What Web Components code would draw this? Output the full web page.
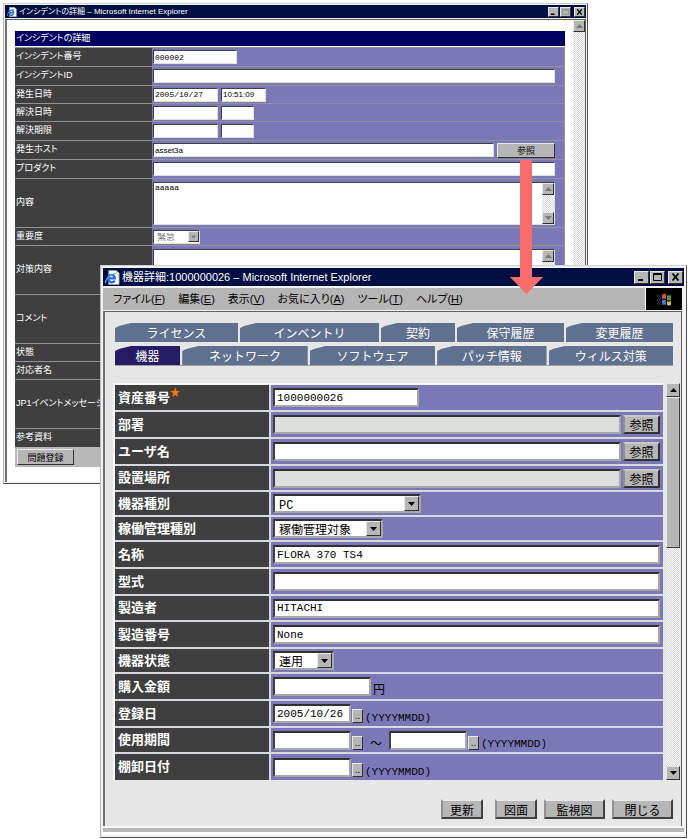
<!DOCTYPE html>
<html lang="ja">
<head>
<meta charset="utf-8">
<title>機器詳細</title>
<style>
    body {
        margin: 0;
        background: #fff;
        font-family: "Liberation Sans", "Noto Sans CJK JP", sans-serif;
    }
</style>
</head>
<body>
<asset-desktop>
    <desktop-window slot="back" small heading="インシデントの詳細 – Microsoft Internet Explorer">
        <incident-form></incident-form>
    </desktop-window>
    <desktop-window slot="front" heading="機器詳細:1000000026 – Microsoft Internet Explorer">
        <menu-bar slot="menu"></menu-bar>
        <tab-strip></tab-strip>
        <asset-form></asset-form>
    </desktop-window>
</asset-desktop>

<script>
// Bevels and reset shared by every shadow root
const BASE = `
    *, *::before, *::after { box-sizing: border-box; }
    button, input, select, textarea {
        margin: 0;
        padding: 0;
        border-radius: 0;
        font: inherit;
        color: #000;
        min-width: 0;
    }
    button {
        background: #b6b6b6;
        border: 1px solid;
        border-color: #e8e8e8 #303030 #303030 #e8e8e8;
        display: flex;
        align-items: center;
        justify-content: center;
    }
`;

class AssetDesktop extends HTMLElement {
    constructor() {
        super();
        this.attachShadow({ mode: 'open' });
        this.shadowRoot.innerHTML = `
            <style>
                ${BASE}
                :host { display: block; position: relative; min-height: 100vh; overflow: hidden; }
                .back { position: absolute; top: 3px; left: 3px; right: 100px; }
                .front { position: relative; margin: 265px 1px 0 100px; }
                .arrow { position: absolute; top: 160px; right: 145px; width: 33px; height: 134px; }
            </style>
            <div class="back"><slot name="back"></slot></div>
            <div class="front"><slot name="front"></slot></div>
            <svg class="arrow" viewBox="0 0 33 134" aria-hidden="true">
                <path fill="#f86c6a" d="M10 0h12v117h11L16.500 134 0 117h10z"/>
            </svg>
        `;
    }
}

class DesktopWindow extends HTMLElement {
    constructor() {
        super();
        this.attachShadow({ mode: 'open' });
    }

    connectedCallback() {
        const small = this.hasAttribute('small');
        this.shadowRoot.innerHTML = `
            <style>
                ${BASE}
                :host {
                    display: block;
                    --bar: 18px;
                    --ctl: 15px;
                    --ctlh: 13px;
                    --page: #e6e6e6;
                    border: 1px solid;
                    border-color: #d0d0d0 #505050 #505050 #b8b8b8;
                    background: #f2f2f2;
                    padding: 2px;
                    font-size: 11px;
                }
                :host([small]) {
                    --bar: 13px;
                    --ctl: 11px;
                    --ctlh: 10px;
                    --page: #fff;
                    padding: 1px;
                    font-size: 8px;
                }
                header {
                    display: flex;
                    align-items: center;
                    height: var(--bar);
                    padding: 0 1px 0 2px;
                    gap: 2px;
                    background: #000e42;
                    color: #fff;
                }
                header svg { flex: none; height: calc(var(--bar) - 3px); width: auto; }
                h1 {
                    flex: 1;
                    margin: 0;
                    font-size: inherit;
                    font-weight: 400;
                    line-height: var(--bar);
                    white-space: nowrap;
                    overflow: hidden;
                    font-feature-settings: "palt";
                }
                .controls { display: flex; gap: 1px; }
                .controls button { width: var(--ctl); height: var(--ctlh); }
                .controls button:last-child { margin-left: 2px; }
                .controls svg { width: 9px; height: 8px; }
                :host([small]) .controls svg { width: 7px; height: 6px; }
                .page {
                    background: var(--page);
                    border-left: 2px solid #707070;
                    border-top: 1px solid #606060;
                    border-right: 1px solid #606060;
                    margin-right: 2px;
                    margin-top: 1px;
                }
                :host([small]) .page { margin-right: 0; }
                .status {
                    height: 9px;
                    border-top: 2px solid #f8f8f8;
                    border-bottom: 3px solid #fff;
                    background: #b8b8b8;
                }
                :host([small]) .status { display: none; }
            </style>
            <header>
                <svg viewBox="0 0 16 16" aria-hidden="true">
                    <path fill="#fff" stroke="#999" d="M4 .5h8l3 3v12H4z"/>
                    <path fill="#c8c8c8" d="M12 .5v3h3z"/>
                    <path fill="none" stroke="#2468d8" stroke-width="2.400" d="M3.500 9h7c0-5-7-5-7 0s5 5 7 2.300"/>
                    <path fill="none" stroke="#58a8f0" stroke-width="1.300" d="M1 14C-1 11 7 3 12 4"/>
                </svg>
                <h1></h1>
                <div class="controls">
                    <button aria-label="最小化"><svg viewBox="0 0 9 8"><path d="M1 6h5v2H1z"/></svg></button>
                    <button aria-label="最大化"><svg viewBox="0 0 9 8"><path fill="none" stroke="${small ? '#888' : '#000'}" d="M.5 .5h8v7h-8zM.5 1.500h8"/></svg></button>
                    <button aria-label="閉じる"><svg viewBox="0 0 9 8"><path stroke="#000" stroke-width="1.800" d="M1.500 .5l6 7M7.500 .5l-6 7"/></svg></button>
                </div>
            </header>
            <slot name="menu"></slot>
            <div class="page"><slot></slot></div>
            <div class="status"></div>
        `;
        this.shadowRoot.querySelector('h1').textContent = this.getAttribute('heading');
    }
}

class MenuBar extends HTMLElement {
    constructor() {
        super();
        const items = [['ファイル', 'F'], ['編集', 'E'], ['表示', 'V'], ['お気に入り', 'A'], ['ツール', 'T'], ['ヘルプ', 'H']];
        this.attachShadow({ mode: 'open' });
        this.shadowRoot.innerHTML = `
            <style>
                ${BASE}
                :host {
                    display: flex;
                    height: 22px;
                    margin: 2px 2px 0 0;
                    background: #b5b5b5;
                    font-size: 11px;
                }
                nav { flex: 1; display: flex; gap: 13px; padding-left: 10px; align-items: center; }
                nav button {
                    background: none;
                    border: 0;
                    line-height: 18px;
                    white-space: nowrap;
                    font-feature-settings: "palt";
                }
                .logo {
                    width: 37px;
                    background: #000;
                    border-left: 1px solid #fff;
                    display: flex;
                    align-items: center;
                    justify-content: center;
                }
            </style>
            <nav>${items.map(([text, key]) => `<button><span>${text}(<u>${key}</u>)</span></button>`).join('')}</nav>
            <div class="logo">
                <svg width="15" height="13" viewBox="0 0 15 13" aria-hidden="true">
                    <path fill="#d85040" d="M5 2q2-2 4-1v5q-2-1-4 0z"/>
                    <path fill="#4c9c50" d="M10 2q2 1 4 0v5q-2 1-4 0z"/>
                    <path fill="#4878d0" d="M5 7q2-1 4 0v5q-2-1-4 0z"/>
                    <path fill="#d8b840" d="M10 8q2 1 4 0v4q-2 1-4 0z"/>
                    <path fill="none" stroke="#5868a0" stroke-dasharray="1 1" d="M0 3h4M1 5h3M0 7h4M1 9h3M0 11h4"/>
                </svg>
            </div>
        `;
    }
}

class TabStrip extends HTMLElement {
    constructor() {
        super();
        // [text, share of the row's width]
        const rows = [
            [['ライセンス', 123], ['インベントリ', 139], ['契約', 74], ['保守履歴', 107], ['変更履歴', 107]],
            [['機器', 65], ['ネットワーク', 125], ['ソフトウェア', 125], ['パッチ情報', 109], ['ウィルス対策', 124]]
        ];
        this.attachShadow({ mode: 'open' });
        this.shadowRoot.innerHTML = `
            <style>
                ${BASE}
                :host { display: grid; gap: 4px; padding: 11px 8px 0 10px; font-size: 12px; }
                .row { display: flex; gap: 2px; }
                .row:last-child { border-bottom: 1px solid #a0a0a0; }
                button {
                    flex: 1 1 0;
                    height: 19px;
                    border: 0;
                    background: #60708f;
                    color: #fff;
                    white-space: nowrap;
                    clip-path: polygon(0 5px, 4px 3px, 16px 0, 100% 0, 100% 100%, 0 100%);
                }
                button[aria-selected="true"] { background: #261c64; }
            </style>
            ${rows.map(row => `<div class="row" role="tablist">${row.map(([text, grow]) =>
                `<button role="tab" aria-selected="${text === '機器'}" style="flex-grow:${grow}">${text}</button>`).join('')}</div>`).join('')}
        `;
    }
}

class WinScrollbar extends HTMLElement {
    constructor() {
        super();
        this.attachShadow({ mode: 'open' });
        this.shadowRoot.innerHTML = `
            <style>
                ${BASE}
                :host {
                    display: flex;
                    flex-direction: column;
                    flex: none;
                    width: var(--size, 12px);
                    background: repeating-conic-gradient(#fafafa 0 25%, #d8d8d8 0 50%) 0 0 / 2px 2px;
                }
                button { height: var(--size, 12px); flex: none; }
                .thumb { height: 38%; background: #b6b6b6; border: 1px solid; border-color: #f0f0f0 #404040 #404040 #f0f0f0; }
                .space { flex: 1; }
                svg { width: 7px; height: 4px; fill: #000; }
                :host(:not([thumb])) .thumb { display: none; }
                :host(:not([thumb])) svg { fill: #777; }
            </style>
            <button aria-label="上へ"><svg viewBox="0 0 7 4"><path d="M0 4L3.500 0 7 4z"/></svg></button>
            <div class="thumb"></div>
            <div class="space"></div>
            <button aria-label="下へ"><svg viewBox="0 0 7 4"><path d="M0 0L3.500 4 7 0z"/></svg></button>
        `;
    }
}

const PICK = `
    .pick { display: grid; align-items: center; }
    .pick select { grid-area: 1 / 1; width: 100%; appearance: none; }
    .pick i {
        grid-area: 1 / 1;
        justify-self: end;
        margin-right: 2px;
        background: #b6b6b6;
        border: 1px solid;
        border-color: #e8e8e8 #303030 #303030 #e8e8e8;
        display: flex;
        align-items: center;
        justify-content: center;
        pointer-events: none;
    }
`;
const DOWN = '<i><svg width="7" height="4" viewBox="0 0 7 4"><path d="M0 0h7L3.500 4z"/></svg></i>';

class IncidentForm extends HTMLElement {
    constructor() {
        super();
        const area = (id, text = '') => `<div class="area"><textarea id="${id}">${text}</textarea><win-scrollbar></win-scrollbar></div>`;
        const rows = [
            ['no', 'インシデント番号', 'mid', '<input id="no" class="w84" value="000002">'],
            ['iid', 'インシデントID', 'mid', '<input id="iid" class="fill">'],
            ['start', '発生日時', 'low', '<input id="start" class="w65" value="2005/10/27"><input class="w45 sans" aria-label="発生時刻" value="10:51:09">'],
            ['end', '解決日時', 'low', '<input id="end" class="w65"><input class="w33" aria-label="解決時刻">'],
            ['due', '解決期限', 'mid', '<input id="due" class="w65"><input class="w33" aria-label="期限時刻">'],
            ['host', '発生ホスト', 'mid', '<input id="host" class="fill sans" value="asset3a"><button class="ref">参照</button>'],
            ['product', 'プロダクト', 'mid', '<input id="product" class="fill">'],
            ['body', '内容', 'tall', area('body', 'aaaaa')],
            ['level', '重要度', 'low', `<div class="pick"><select id="level" disabled><option>緊急</option></select>${DOWN}</div>`],
            ['action', '対策内容', 'tall', area('action')],
            ['comment', 'コメント', 'tall', area('comment')],
            ['state', '状態', 'low', '<input id="state" class="fill">'],
            ['person', '対応者名', 'low', '<input id="person" class="fill">'],
            ['event', 'JP1イベントメッセージ', 'tall', area('event')],
            ['docs', '参考資料', 'mid', '<input id="docs" class="fill">']
        ];
        this.attachShadow({ mode: 'open' });
        this.shadowRoot.innerHTML = `
            <style>
                ${BASE}
                ${PICK}
                :host { display: flex; font-size: 9px; }
                form { flex: 1; padding: 11px 8px 15px; }
                h2 {
                    margin: 0 0 1px;
                    padding-left: 1px;
                    height: 15px;
                    line-height: 14px;
                    font-size: 9px;
                    font-weight: 400;
                    color: #fff;
                    background: #000060;
                    font-feature-settings: "palt";
                }
                .row {
                    display: grid;
                    grid-template-columns: 137px 1fr;
                    border: 1px solid #929298;
                    border-width: 1px 1px 0 0;
                    background: #3f3f3f;
                }
                .low { height: 18px; }
                .mid { height: 19px; }
                .tall { height: 49px; }
                label {
                    align-self: center;
                    padding: 0 0 2px 1px;
                    line-height: 14px;
                    color: #fff;
                    white-space: nowrap;
                    font-feature-settings: "palt";
                }
                .value {
                    display: flex;
                    align-items: center;
                    gap: 3px;
                    padding: 0 9px 0 1px;
                    background: #7b78b8;
                }
                input, textarea, select {
                    height: 14px;
                    padding: 0 1px;
                    border: 1px solid;
                    border-color: #404040 #e0e0e0 #e0e0e0 #404040;
                    background: #fff;
                    font: 8px "Liberation Mono", "Noto Sans CJK JP", monospace;
                }
                .sans { font-family: "Liberation Sans", sans-serif; }
                .fill { flex: 1; }
                .w84 { width: 84px; }
                .w65 { width: 65px; }
                .w45 { width: 45px; }
                .w33 { width: 33px; }
                .ref { width: 58px; height: 15px; }
                .area { flex: 1; display: flex; height: 43px; border: 1px solid; border-color: #404040 #e0e0e0 #e0e0e0 #404040; background: #fff; }
                .area textarea { flex: 1; height: auto; border: 0; resize: none; }
                .pick { width: 47px; }
                select { font-size: 9px; padding: 2px 0 0 3px; }
                select:disabled { color: #777; opacity: 1; }
                .pick i { width: 11px; height: 11px; margin-right: 1px; }
                .pick svg { fill: #777; width: 5px; }
                footer { height: 20px; padding: 2px; background: #b8b8b8; }
                footer button { width: 57px; height: 16px; }
            </style>
            <form>
                <h2>インシデントの詳細</h2>
                ${rows.map(([id, label, size, control]) =>
                    `<div class="row ${size}"><label for="${id}">${label}</label><div class="value">${control}</div></div>`).join('')}
                <footer><button type="button">問題登録</button></footer>
            </form>
            <win-scrollbar></win-scrollbar>
        `;
    }
}

class AssetForm extends HTMLElement {
    constructor() {
        super();
        const select = (id, text, width) => `<div class="pick ${width}"><select id="${id}"><option>${text}</option></select>${DOWN}</div>`;
        const date = (id, value = '') => `<span class="date"><input id="${id}" class="w78" value="${value}" aria-label="日付"><button type="button" class="dots">..</button></span>`;
        const ref = '<button type="button" class="ref">参照</button>';
        const rows = [
            ['asset', '資産番号<b>★</b>', 'tall', '<input id="asset" class="w146" value="1000000026">'],
            ['dept', '部署', 'tall', `<input id="dept" class="fill" readonly>${ref}`],
            ['user', 'ユーザ名', 'tall', `<input id="user" class="fill">${ref}`],
            ['place', '設置場所', 'mid', `<input id="place" class="fill" readonly>${ref}`],
            ['kind', '機器種別', 'low', select('kind', 'PC', 'w148')],
            ['run', '稼働管理種別', 'low', select('run', '稼働管理対象', 'w110')],
            ['name', '名称', 'tall', '<input id="name" class="fill" value="FLORA 370 TS4">'],
            ['model', '型式', 'tall', '<input id="model" class="fill">'],
            ['maker', '製造者', 'mid', '<input id="maker" class="fill" value="HITACHI">'],
            ['serial', '製造番号', 'tall', '<input id="serial" class="fill" value="None">'],
            ['state', '機器状態', 'low', select('state', '運用', 'w61')],
            ['price', '購入金額', 'tall', '<input id="price" class="w98"><span class="yen">円</span>'],
            ['added', '登録日', 'tall', `${date('added', '2005/10/26')}<span class="hint">(YYYYMMDD)</span>`],
            ['from', '使用期間', 'mid', `${date('from')}<span class="wave">～</span>${date('to')}<span class="hint">(YYYYMMDD)</span>`],
            ['stock', '棚卸日付', 'tall', `${date('stock')}<span class="hint">(YYYYMMDD)</span>`]
        ];
        this.attachShadow({ mode: 'open' });
        this.shadowRoot.innerHTML = `
            <style>
                ${BASE}
                ${PICK}
                :host { display: block; padding: 17px 1px 7px 8px; font-size: 12px; }
                .scroller { display: flex; gap: 3px; --size: 14px; }
                .rows { flex: 1; border: 2px solid #fafafa; border-width: 2px 0 0 2px; }
                .row {
                    display: grid;
                    grid-template-columns: 154px 1fr;
                    gap: 2px;
                    background: #d8d8e0;
                    border-bottom: 2px solid #d8d8e0;
                }
                .low { height: 25px; }
                .mid { height: 26px; }
                .tall { height: 27px; }
                .row:last-child { border-bottom: 0; height: 26px; }
                label {
                    display: flex;
                    align-items: center;
                    padding-left: 3px;
                    background: #3f3f3f;
                    color: #fff;
                    font-size: 13px;
                    font-weight: 700;
                    line-height: 18px;
                }
                label b { color: #ff7800; font-size: 10px; line-height: 10px; align-self: flex-start; padding-top: 3px; }
                .value { display: flex; align-items: center; gap: 2px; padding: 0 3px 0 2px; background: #7b78b8; }
                input, select {
                    height: 19px;
                    padding: 0 2px;
                    border: 2px solid;
                    border-color: #303030 #a8a8a8 #a8a8a8 #404040;
                    background: #fff;
                    font: 11px "Liberation Mono", "Noto Sans CJK JP", monospace;
                }
                input[readonly] { background: #dcdedc; }
                .fill { flex: 1; }
                .w146 { width: 146px; }
                .w148 { width: 148px; }
                .w110 { width: 110px; }
                .w98 { width: 98px; }
                .w78 { width: 78px; }
                .w61 { width: 61px; }
                select { font-size: 12px; padding: 3px 0 0 4px; }
                .pick i { width: 15px; height: 15px; }
                .ref { width: 37px; height: 19px; border-width: 2px; border-color: #c8c8c8 #303030 #303030 #909090; }
                .date { display: flex; align-items: flex-end; gap: 1px; }
                .dots { width: 11px; height: 14px; font-size: 10px; line-height: 10px; }
                .yen { align-self: flex-end; line-height: 17px; }
                .hint { align-self: flex-end; font: 11px/16px "Liberation Mono", monospace; }
                .wave { padding: 0 5px; line-height: 16px; align-self: flex-end; }
                footer { display: flex; justify-content: flex-end; gap: 7px; padding: 19px 7px 0 0; }
                footer button {
                    height: 20px;
                    padding: 0 8px;
                    border: 2px solid;
                    border-color: #e8e8e8 #404040 #404040 #909090;
                    white-space: nowrap;
                }
                .short { width: 42px; }
                .long { width: 61px; }
                .first { margin-right: 5px; }
            </style>
            <div class="scroller">
                <div class="rows">
                    ${rows.map(([id, label, size, control]) =>
                        `<div class="row ${size}"><label for="${id}">${label}</label><div class="value">${control}</div></div>`).join('')}
                </div>
                <win-scrollbar thumb></win-scrollbar>
            </div>
            <footer>
                <button class="short first">更新</button>
                <button class="short">図面</button>
                <button class="long">監視図</button>
                <button class="long">閉じる</button>
            </footer>
        `;
    }
}

customElements.define('win-scrollbar', WinScrollbar);
customElements.define('menu-bar', MenuBar);
customElements.define('tab-strip', TabStrip);
customElements.define('incident-form', IncidentForm);
customElements.define('asset-form', AssetForm);
customElements.define('desktop-window', DesktopWindow);
customElements.define('asset-desktop', AssetDesktop);
</script>
</body>
</html>
